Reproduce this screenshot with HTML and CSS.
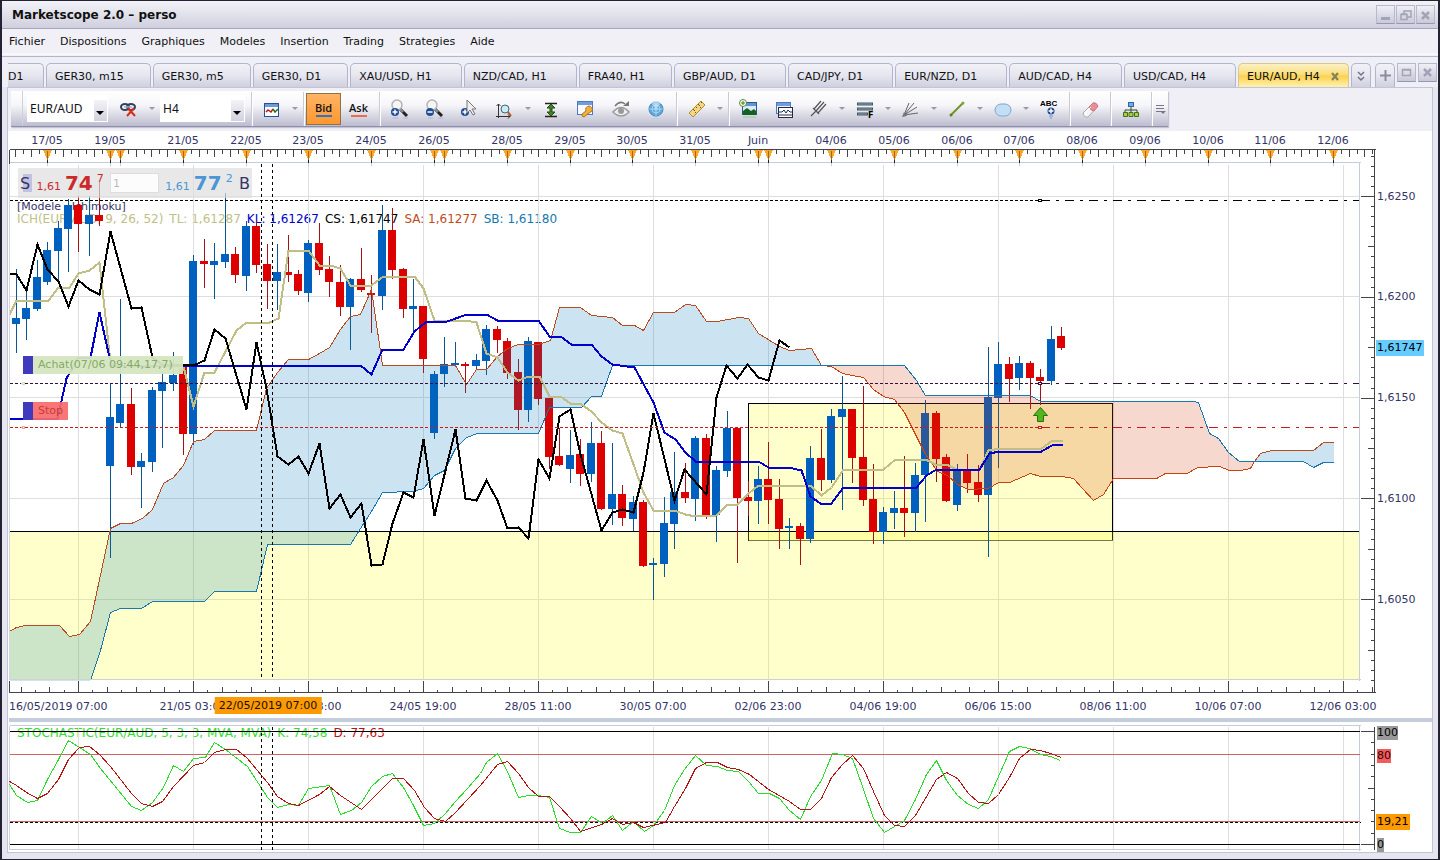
FILE: index.html
```html
<!DOCTYPE html>
<html lang="fr">
<head>
    <meta charset="utf-8">
    <title>Marketscope 2.0 – perso</title>
    <link rel="stylesheet" href="styles.css">
</head>
<body>
    <header class="titlebar">
        <h1>Marketscope 2.0 – perso</h1>
        <div class="winbtns">
            <button class="winbtn" aria-label="Réduire"><svg width="17" height="17"><path d="M4 12.5h9" stroke-width="3"/></svg></button>
            <button class="winbtn" aria-label="Restaurer"><svg width="17" height="17"><path d="M4 8.500h6v5h-6zM4 8h6M7 8V5h7v6h-4M7 5h7" stroke-width="1.500"/></svg></button>
            <button class="winbtn" aria-label="Fermer"><svg width="17" height="17"><path d="M5 6l7 7M12 6l-7 7" stroke-width="2.500"/></svg></button>
        </div>
    </header>

    <nav class="menu">
        <a href="#">Fichier</a>
        <a href="#">Dispositions</a>
        <a href="#">Graphiques</a>
        <a href="#">Modeles</a>
        <a href="#">Insertion</a>
        <a href="#">Trading</a>
        <a href="#">Strategies</a>
        <a href="#">Aide</a>
    </nav>

    <div class="tabs">
        <div class="tablist">
            <button class="tab first">D1</button>
            <button class="tab short">GER30, m15</button>
            <button class="tab short">GER30, m5</button>
            <button class="tab short">GER30, D1</button>
            <button class="tab">XAU/USD, H1</button>
            <button class="tab">NZD/CAD, H1</button>
            <button class="tab short">FRA40, H1</button>
            <button class="tab">GBP/AUD, D1</button>
            <button class="tab">CAD/JPY, D1</button>
            <button class="tab">EUR/NZD, D1</button>
            <button class="tab">AUD/CAD, H4</button>
            <button class="tab">USD/CAD, H4</button>
            <button class="tab active">EUR/AUD, H4<svg width="9" height="9"><path d="M1 1l6 7M7 1l-6 7" stroke="#85805f" stroke-width="2.200"/></svg></button>
        </div>
        <button class="tab small" aria-label="Liste"><svg width="18" height="22"><path d="M6 8l3 3 3-3M6 13l3 3 3-3" fill="none" stroke="#73738a" stroke-width="1.500"/></svg></button>
        <button class="tab small" aria-label="Ajouter"><svg width="18" height="22"><path d="M4 11.500h11M9.500 6v11" stroke="#8b8ba0" stroke-width="2"/></svg></button>
        <button class="winbtn" aria-label="Agrandir"><svg width="17" height="17"><path d="M4.500 5.500h8v6h-8zM4 6h9" stroke-width="1.500"/></svg></button>
        <button class="winbtn" aria-label="Fermer le graphique"><svg width="17" height="17"><path d="M5 5l7 7M12 5l-7 7" stroke-width="2.500"/></svg></button>
    </div>

    <main class="panel">
        <div class="toolrow">
            <div class="toolbar">
                <span class="grip"></span>
                <span class="combo symbol"><select aria-label="Instrument"><option>EUR/AUD</option></select></span>
                <button class="tool" aria-label="Lien"><svg width="20" height="24"><g fill="none" stroke="#33415e" stroke-width="2"><ellipse cx="6" cy="9" rx="4" ry="3"/><ellipse cx="12" cy="9" rx="4" ry="3"/></g><path d="M5 9h8" stroke="#a8b4cc" stroke-width="1.500"/><path d="M9 10l7 8M15 10l-7 8" stroke="#d2301c" stroke-width="2"/></svg></button>
                <span class="caret"></span>
                <span class="combo period"><select aria-label="Periode"><option>H4</option></select></span>
                <span class="sep"></span>
                <button class="tool" aria-label="Type de graphique"><svg width="20" height="24"><rect x="2.500" y="5.500" width="14" height="13" fill="#fff" stroke="#27509b"/><rect x="3" y="6" width="13" height="3" fill="#6b9bdb"/><path d="M4 14l2-2 3 2 2-3" fill="none" stroke="#c31818" stroke-width="1.500"/><path d="M11 11l2 3 3-3" fill="none" stroke="#257525" stroke-width="1.500"/><path d="M3 21h13" stroke="#b9c9e4"/></svg></button>
                <span class="caret"></span>
                <span class="sep"></span>
                <button class="tool price bid">Bid</button>
                <button class="tool price ask">Ask</button>
                <span class="sep"></span>
                <button class="tool" aria-label="Zoom avant"><svg width="22" height="24"><use href="#lens"/><circle cx="6" cy="14" r="4" fill="#204c98"/><path d="M3.500 14h5M6 11.500v5" stroke="#fff" stroke-width="1.500"/></svg></button>
                <button class="tool" aria-label="Zoom arriere"><svg width="22" height="24"><use href="#lens"/><circle cx="6" cy="14" r="4" fill="#204c98"/><path d="M3.500 14h5" stroke="#fff" stroke-width="1.500"/></svg></button>
                <button class="tool" aria-label="Curseur"><svg width="22" height="24"><circle cx="6" cy="14" r="4" fill="#204c98"/><path d="M3.500 14h5M6 11.500v5" stroke="#fff" stroke-width="1.500"/><path d="M8 2v13l3-3 3 5 2-1-3-5h4z" fill="#eee" stroke="#777"/></svg></button>
                <button class="tool" aria-label="Zoom axe"><svg width="20" height="24"><path d="M3.500 6v14M1 18.500h14" stroke="#333"/><path d="M1.500 8l2-2 2 2M13 16.500l2 2-2 2" fill="none" stroke="#333"/><circle cx="10" cy="11" r="4" fill="#c6ecf7" stroke="#4f606c"/><path d="M13 14l3 4" stroke="#b65a24" stroke-width="2"/></svg></button>
                <span class="caret"></span>
                <button class="tool" aria-label="Ajuster"><svg width="20" height="24"><path d="M4 5.500h12M4 18.500h12" stroke="#222" stroke-width="1.500"/><path d="M10 6l4 4h-3v4h3l-4 4-4-4h3v-4H6z" fill="#438321" stroke="#234f12"/></svg></button>
                <button class="tool" aria-label="Proprietes"><svg width="22" height="24"><rect x="2.500" y="3.500" width="15" height="13" fill="#f7faff" stroke="#5078be"/><rect x="3" y="4" width="14" height="3" fill="#709ce0"/><path d="M14 8a3.500 3.500 0 013 5l-3 2-5 4-2-1v-2l4-3a3.500 3.500 0 013-5z" fill="#efb13b" stroke="#af7522"/></svg></button>
                <button class="tool" aria-label="Afficher"><svg width="22" height="24"><path d="M3 14q8-9 16 0q-8 8-16 0z" fill="#eee" stroke="#9a9a9a" stroke-width="1.500"/><circle cx="11" cy="13" r="3" fill="#999"/><path d="M5 8q5-6 10-2" fill="none" stroke="#777" stroke-width="1.500"/><path d="M13 8h6V3z" fill="#777"/></svg></button>
                <button class="tool" aria-label="Radar"><svg width="20" height="24"><circle cx="10" cy="11" r="7" fill="#5fa9dd" stroke="#3c84be"/><g fill="none" stroke="#c0e2f5" stroke-opacity=".7"><circle cx="10" cy="11" r="4"/><circle cx="10" cy="11" r="1.500"/><path d="M10 4v14M3 11h14"/></g><path d="M10 11L5 5a8 8 0 0110 0z" fill="#e5f5fd" opacity=".5"/><path d="M6 21q4-2 8 0" stroke="#b6d3e8" fill="none"/></svg></button>
                <span class="sep"></span>
                <button class="tool" aria-label="Regle"><svg width="20" height="24"><path d="M2 15L14 3l4 4L6 19z" fill="#f2d783" stroke="#b68d35"/><path d="M6 11l2 2M9 9l1 1M11 6l2 2M14 4l1 1M8 15l1-1M13 10l1-1" stroke="#78571a"/></svg></button>
                <span class="caret"></span>
                <span class="sep"></span>
                <button class="tool" aria-label="Ajouter indicateur"><svg width="22" height="24"><rect x="4.500" y="4.500" width="14" height="12" fill="#d8edfc" stroke="#27589c"/><rect x="5" y="5" width="13" height="3" fill="#6594d5"/><path d="M5 17v-4l4-3 4 3 3-2 2 2v4z" fill="#166020"/><circle cx="5" cy="5" r="3.500" fill="#fff" stroke="#548d22"/><path d="M3 5h4M5 3v4" stroke="#467b17"/><path d="M5 19h13" stroke="#9dc29d"/></svg></button>
                <button class="tool" aria-label="Fenetres"><svg width="22" height="24"><rect x="3.500" y="4.500" width="14" height="11" fill="#edf3fc" stroke="#5377b4"/><rect x="4" y="5" width="13" height="3" fill="#709ce0"/><rect x="5.500" y="9.500" width="14" height="10" fill="#fff" stroke="#222b49"/><path d="M6 14h3l2-2 2 3 2-3 2 2h3M6 17h13" fill="none" stroke="#222b49"/></svg></button>
                <button class="tool" aria-label="Fourche"><svg width="20" height="24"><path d="M2 18L7 13M4 10l6 6M7 13L15 4M5 11l7-8M9 15l8-9" stroke="#555" stroke-width="1.200"/></svg></button>
                <span class="caret"></span>
                <button class="tool" aria-label="Fibonacci"><svg width="20" height="24"><path d="M2 6h16M2 11h16M2 16h11" stroke="#405866" stroke-width="3"/><path d="M3 6h14M3 11h14M3 16h9" stroke="#8ca3ae"/><text x="13" y="20" class="fmark">F</text></svg></button>
                <span class="caret"></span>
                <button class="tool" aria-label="Eventail"><svg width="20" height="24"><path d="M3 17L8 5M3 17L13 5M3 17l13-8M3 17l14-2" stroke="#666"/><path d="M1 19l2-5 3 4z" fill="#777"/></svg></button>
                <span class="caret"></span>
                <button class="tool" aria-label="Ligne"><svg width="20" height="24"><path d="M4 17L16 5" stroke="#739426" stroke-width="2"/><circle cx="4" cy="17" r="1.500" fill="#5d821b"/><circle cx="16" cy="5" r="1.500" fill="#85a53b"/></svg></button>
                <span class="caret"></span>
                <button class="tool" aria-label="Ellipse"><svg width="20" height="24"><rect x="2" y="6" width="16" height="12" rx="6" fill="#c3dff5" stroke="#7ea6cc"/></svg></button>
                <span class="caret"></span>
                <button class="tool" aria-label="Texte"><svg width="22" height="28"><text x="2" y="10" class="abc">ABC</text><circle cx="13" cy="15" r="3.500" fill="#1d498f"/><path d="M10.500 15h5M13 12.500v5" stroke="#fff" stroke-width="1.500"/><path d="M11 20h4M12 22h2" stroke="#6d94cf"/></svg></button>
                <span class="sep"></span>
                <button class="tool" aria-label="Effacer"><svg width="20" height="24"><path d="M3 15L13 5q3-1 5 3L8 19q-4 1-5-4z" fill="#f5f5f5" stroke="#aaa"/><path d="M9 9l4-4q3-1 5 3l-4 5q-3 0-5-4z" fill="#ea8f98" stroke="#cc7682"/><path d="M5 17q1-4 6-8" stroke="#fff" fill="none"/></svg></button>
                <span class="sep"></span>
                <button class="tool" aria-label="Strategies"><svg width="20" height="24"><rect x="7.500" y="4.500" width="5" height="4" fill="#73a9e4" stroke="#2c68ae"/><path d="M10 9v5M4 15v-3h12v3" fill="none" stroke="#33521a"/><path d="M2.500 14.500h4v4h-4zM8 14.500h4v4h-4zM13.500 14.500h4v4h-4z" fill="#acd143" stroke="#456c17"/></svg></button>
                <span class="sep"></span>
                <button class="tool more" aria-label="Plus"><svg width="12" height="14"><path d="M1 2.500h8M1 5.500h8M1 8.500h5" stroke="#777789"/><path d="M5 8h6l-3 3z" fill="#777789"/></svg></button>
            </div>
        </div>

        <section class="chart">
            <div class="dates top" id="topDates"></div>
            <div class="plot">
                <div class="legend">
                    <p class="model">[Modele : Ichimoku]</p>
                    <p><span class="tl">ICH(EUR/AUD, 9, 26, 52)</span><span class="tl">TL: 1,61287</span><span class="kl">KL: 1,61267</span><span class="cs">CS: 1,61747</span><span class="sa">SA: 1,61277</span><span class="sb">SB: 1,61180</span></p>
                </div>
                <svg id="mainChart" viewBox="9 149 1367 544" preserveAspectRatio="none"></svg>
                <div class="quote">
                    <span class="side">S</span>
                    <span class="sell"><small>1,61</small><b>74</b><sup>7</sup></span>
                    <input type="text" value="1" aria-label="Quantite">
                    <span class="buy"><small>1,61</small><b>77</b><sup>2</sup></span>
                    <span class="side">B</span>
                </div>
                <div class="order buyorder">Achat(07/06 09:44,17,7)</div>
                <div class="order stop">Stop</div>
            </div>
            <div class="prices" id="prices"></div>
            <div class="dates bottom" id="bottomDates"></div>
        </section>

        <div class="splitter"></div>

        <section class="stoch">
            <div class="plot">
                <div class="legend stochlegend">
                    <p><span class="k">STOCHASTIC(EUR/AUD, 5, 3, 3, MVA, MVA)</span><span class="k">K: 74,58</span><span class="d">D: 77,63</span></p>
                </div>
                <svg id="stochChart" viewBox="9 722 1367 130" preserveAspectRatio="none"></svg>
            </div>
            <div class="prices" id="levels"></div>
        </section>
    </main>

    <!-- loupe commune aux deux zooms -->
    <svg width="0" height="0" class="defs">
        <g id="lens"><path d="M11 11l7 7" stroke="#222" stroke-width="3"/><path d="M11 11l3 3" stroke="#888" stroke-width="3"/><circle cx="8" cy="7" r="5" fill="#f5f5f5" stroke="#b5b5b9" stroke-width="1.500"/><path d="M4 20h5M14 20h5" stroke="#a9b9d6"/></g>
    </svg>

    <script src="chart.js"></script>
</body>
</html>
```
FILE: styles.css
```css
* {
    box-sizing: border-box;
}

body {
    margin: 0;
    height: 100vh;
    min-height: 500px;
    display: flex;
    flex-direction: column;
    background: #e6e6f0;
    border: 1px solid #252333;
    border-width: 1px 2px 1px 2px;
    font-family: "DejaVu Sans", Verdana, sans-serif;
    font-size: 11px;
    color: #111;
    overflow: hidden;
}

button, input, select {
    font: inherit;
    color: inherit;
    margin: 0;
    padding: 0;
}

p {
    margin: 0;
}

.defs {
    position: absolute;
}

/* barre de titre */
.titlebar {
    height: 28px;
    flex: none;
    display: flex;
    align-items: center;
    justify-content: space-between;
    padding: 0 3px 0 10px;
    background: linear-gradient(#f2f2f8, #e0e0ea 55%, #cfcfde);
    border-bottom: 1px solid #a9a7c0;
}

h1 {
    margin: 0;
    font-size: 12px;
}

.winbtns {
    display: flex;
    gap: 1px;
}

.winbtn {
    width: 19px;
    height: 19px;
    flex: none;
    background: linear-gradient(#efeff6, #c9c9da);
    border: 1px solid #b9b9cc;
    border-bottom-color: #9797b0;
}

.winbtn svg {
    display: block;
    fill: none;
    stroke: #a3a3b8;
}

/* menu */
.menu {
    height: 28px;
    flex: none;
    display: flex;
    gap: 15px;
    padding: 0 7px;
    line-height: 25px;
    background: linear-gradient(#f0f0f6 24px, #fff 25px, #f0f0f6 26px);
    border-bottom: 1px solid #b8b2cf;
}

.menu a {
    color: #111;
    text-decoration: none;
}

/* onglets */
.tabs {
    height: 30px;
    flex: none;
    display: flex;
    align-items: flex-start;
    gap: 2px;
    padding: 6px 1px 0 6px;
    background: #efeff6;
}

.tablist {
    flex: 1;
    display: flex;
    gap: 2px;
    overflow: hidden;
}

.tab {
    height: 24px;
    flex: none;
    padding: 1px 29px 0 8px;
    white-space: nowrap;
    background: linear-gradient(#f1f1f7, #e6e6f0 50%, #cfcfdf);
    border: 1px solid #b6b3cf;
    border-bottom: 0;
    border-radius: 5px 5px 0 0;
}

.tab.short {
    padding-right: 26px;
}

.tab.first {
    width: 36px;
    padding: 1px 0 0;
    border-left: 0;
    border-top-left-radius: 0;
    text-align: left;
}

.tab.active {
    padding-right: 8px;
    background: linear-gradient(#fbf1c4, #fadf7b 45%, #ffd04a 52%, #fdf2b4);
    border-color: #d8c88e;
}

.tab.active svg {
    margin-left: 11px;
    vertical-align: -1px;
}

.tab.small {
    width: 20px;
    padding: 0;
    margin-right: 2px;
}

.tab.small + .winbtn {
    margin-left: -2px;
}

/* zone principale */
.panel {
    flex: 1;
    min-height: 0;
    display: flex;
    flex-direction: column;
    margin: 0 5px 6px 5px;
    background: #fff;
    border: 1px solid #c5c3d8;
    padding-left: 1px;
}

.toolrow {
    height: 43px;
    flex: none;
    margin-left: -1px;
    padding: 3px 0 0 3px;
    background: #efeff5;
}

.toolbar {
    display: inline-flex;
    align-items: center;
    height: 36px;
    background: linear-gradient(#fff, #f6f6fa 40%, #d9d9e4 70%, #bcbccf);
    border-bottom: 1px solid #8f8fab;
    box-shadow: 1px 1px 1px #c5c5d5;
}

.grip {
    width: 12px;
    height: 35px;
    margin-right: 4px;
    border-right: 1px solid #d0d0de;
}

.combo {
    position: relative;
    height: 27px;
    width: 81px;
    background: #fff;
}

.combo.period {
    width: 85px;
    margin: 0 3px;
}

.combo.symbol {
    margin-right: 3px;
}

.combo select {
    appearance: none;
    width: 100%;
    height: 26px;
    padding: 0 3px;
    background: none;
    border: 0;
    font-family: "Noto Sans", Tahoma, sans-serif;
    font-size: 12px;
}

.combo::after {
    content: "";
    position: absolute;
    right: 1px;
    bottom: 1px;
    width: 13px;
    height: 21px;
    background: linear-gradient(#f2f2f7, #d2d2df);
    pointer-events: none;
}

.combo::before {
    content: "";
    position: absolute;
    z-index: 1;
    right: 4px;
    bottom: 7px;
    border: 4px solid transparent;
    border-top: 4px solid #000;
    border-bottom: 0;
    pointer-events: none;
}

.tool {
    width: 35px;
    height: 32px;
    display: flex;
    align-items: center;
    justify-content: center;
    background: none;
    border: 0;
}

.tool svg {
    margin-top: 2px;
}

.tool.more {
    width: 14px;
}

.tool.price {
    font-family: "Open Sans", sans-serif;
    font-size: 11px;
    font-weight: 600;
    line-height: 14px;
    flex-direction: column;
}

.tool.price::after {
    content: "";
    width: 16px;
    height: 2px;
    background: #ee6a4b;
}

.tool.bid {
    background: linear-gradient(#fdb365, #fd9830);
    border: 1px solid #8d7348;
}

.tool.bid::after {
    background: #2c76c4;
}

.caret {
    width: 11px;
}

.caret::after {
    content: "";
    display: block;
    margin-left: 3px;
    width: 0;
    border: 3px solid transparent;
    border-top-color: #9a9aab;
    border-bottom: 0;
}

.sep {
    width: 6px;
    height: 34px;
    background: linear-gradient(90deg, transparent 3px, #c9c9d8 3px, #c9c9d8 4px, #fff 4px, #fff 5px, transparent 5px);
}

.fmark {
    font: bold 8px "DejaVu Sans", sans-serif;
}

.abc {
    font: bold 8px "Liberation Sans", sans-serif;
}

/* graphique */
.chart {
    flex: 1;
    min-height: 0;
    display: grid;
    grid-template: 18px minmax(0, 1fr) 25px / minmax(0, 1fr) 56px;
}

.dates {
    position: relative;
    grid-column: 1 / 3;
    color: #333366;
}

.dates span {
    position: absolute;
    white-space: nowrap;
    transform: translateX(-50%);
    line-height: 19px;
}

.dates.bottom span {
    top: 4px;
}

.dates .start {
    transform: none;
}

.dates.bottom .cursor {
    padding: 0 4px;
    line-height: 17px;
    background: #ff9900;
    color: #111;
}

.plot {
    position: relative;
    min-height: 0;
}

.plot > svg {
    position: relative;
    display: block;
    width: 100%;
    height: 100%;
}

.prices {
    position: relative;
    color: #333366;
}

.prices span {
    position: absolute;
    left: 1px;
    line-height: 14px;
    transform: translateY(-50%);
}

.prices .last, .prices .value {
    left: 0;
    padding: 0 1px;
    line-height: 16px;
    background: #66ccff;
    color: #000;
}

.prices .value {
    background: #ff9900;
}

.prices .grey {
    background: #999;
    color: #000;
}

.prices .red {
    background: #f25c5c;
    color: #300;
}

.legend {
    position: absolute;
    left: 8px;
    top: 51px;
    font-size: 12px;
    line-height: 13px;
    white-space: nowrap;
}

.stochlegend {
    top: 5px;
}

.legend span {
    margin-right: 6px;
}

.legend .model {
    font-size: 11px;
    color: #333366;
}

.tl { color: #c0c088; }
.kl { color: #0000cc; }
.cs { color: #000; }
.sa { color: #bf4a1c; }
.sb { color: #1478af; }
.k { color: #33dd33; }
.d { color: #c01010; }

/* prix achat / vente */
.quote {
    position: absolute;
    left: 9px;
    top: 19px;
    width: 234px;
    height: 30px;
    display: flex;
    align-items: center;
    justify-content: space-between;
    padding: 0 2px;
    background: linear-gradient(90deg, transparent 5px, rgba(120, 120, 210, .35) 5px, rgba(120, 120, 210, .35) 14px, transparent 14px) 0 6px / 100% 18px no-repeat, rgba(222, 222, 222, .7);
}

.quote .side {
    font-size: 16px;
    color: #333366;
}

.quote small {
    font-size: 11px;
    margin-right: 4px;
}

.quote b {
    font-size: 20px;
}

.quote sup {
    font-size: 11px;
    line-height: 0;
    margin-left: 4px;
    vertical-align: 8px;
}

.sell { color: #cc2a2a; }
.buy { color: #4b96d6; }

.quote input {
    width: 49px;
    height: 20px;
    padding: 0 2px;
    border: 1px solid #ddd;
    background: rgba(255, 255, 255, .85);
    color: #bbb;
}

.order {
    position: absolute;
    left: 14px;
    height: 18px;
    line-height: 18px;
    padding: 0 5px;
    border-left: 10px solid #3e3cbd;
}

.buyorder {
    top: 38%;
    padding-right: 10px;
    background: rgba(214, 230, 192, .95);
    color: #84aa68;
}

.stop {
    top: 253px;
    background: rgba(250, 105, 105, .92);
    color: #c43d3d;
}

.splitter {
    height: 4px;
    flex: none;
    background: #c3cddc;
}

.stoch {
    flex: none;
    height: 130px;
    display: grid;
    grid-template-columns: minmax(0, 1fr) 56px;
}
```
FILE: chart.js
```js
var X0 = 9, W = 1423;
var STEP = 115 / 11; // une bougie H4

// [meche haut, meche bas, corps haut, corps bas, hausse]
var candles = [
    [268,352,318,324,1],[290,339,308,319,1],[259,310,277,309,1],[241,284,250,282,1],[220,282,228,251,1],[198,271,205,229,1],
    [195,251,205,224,0],[195,255,215,224,1],[181,225,215,221,0],[382,557,417,466,1],[298,427,404,423,1],[387,474,404,467,0],
    [452,507,461,467,1],[386,471,390,462,1],[370,447,382,391,1],[351,390,375,383,1],[366,454,366,434,0],[254,444,261,434,1],
    [238,287,261,264,0],[242,298,261,265,1],[192,267,254,262,1],[246,282,254,275,0],[220,290,226,276,1],[220,272,226,265,0],
    [243,308,264,281,0],[243,309,272,281,1],[234,281,272,275,0],[269,294,274,291,0],[239,301,243,293,1],[222,274,243,270,0],
    [255,296,269,282,0],[264,315,282,307,0],[277,349,279,307,1],[247,291,279,290,0],[274,332,293,295,0],[204,309,230,296,1],
    [207,278,230,270,0],[267,317,269,309,0],[278,333,306,309,1],[306,372,306,359,0],[370,438,374,433,1],[336,386,364,374,1],
    [341,366,363,365,1],[361,392,364,366,0],[353,369,360,366,1],[324,374,329,361,1],[325,352,329,340,0],[337,378,341,373,0],
    [358,429,372,410,0],[336,421,341,410,1],[342,404,342,399,0],[396,468,398,457,0],[427,465,456,465,0],[429,482,455,469,1],
    [438,485,454,474,0],[421,481,443,474,1],[430,509,443,509,0],[442,524,494,509,1],[484,525,494,518,0],[495,530,502,519,1],
    [499,566,502,566,0],[557,599,563,565,1],[496,576,523,564,1],[451,548,492,524,1],[462,502,492,498,0],[435,520,438,499,1],
    [433,518,438,516,0],[465,541,470,515,1],[410,476,428,471,1],[428,562,428,498,0],[480,515,497,501,0],[465,523,479,501,1],
    [441,523,479,500,0],[478,548,499,529,0],[517,548,526,528,1],[522,564,526,539,0],[445,542,458,539,1],[428,490,458,480,0],
    [408,482,416,480,1],[375,509,409,417,1],[409,482,409,458,0],[385,505,457,500,0],[463,543,499,532,0],[506,543,512,532,1],
    [490,528,508,513,1],[455,536,508,513,0],[462,531,475,513,1],[399,521,413,475,1],[410,481,413,459,0],[453,501,457,501,0],
    [463,510,470,505,1],[453,492,471,483,0],[464,501,482,495,0],[346,556,397,495,1],[341,467,364,398,1],[356,401,364,379,0],
    [355,389,363,378,1],[360,408,363,378,0],[368,404,377,381,0],[325,384,339,381,1],[326,349,336,348,0]
];

var chikou = "9,273 16,274 26,290 37,244 47,269 58,281 68,306 78,280 89,289 99,294 110,231 131,308 141,307 152,357 162,364 193,365 204,360 214,329 225,338 246,409 256,342 266,388 277,456 288,464 298,456 308,473 319,443 329,508 340,494 350,517 361,503 371,565 382,564 392,523 403,492 413,497 423,439 434,515 455,429 465,498 476,500 486,480 497,500 507,528 518,527 528,538 538,459 549,478 559,416 570,409 580,454 601,530 612,512 622,509 633,512 643,472 653,413 674,500 684,469 706,494 716,397 726,365 737,378 747,364 758,377 768,380 779,340 789,347";
var kijun = "9,418 57,418 66,378 78,357 90,357 99,312 109,357 112,365 360,365 371,374 382,349 403,349 414,331 425,322 447,321 466,314 486,314 497,320 538,320 549,336 560,336 571,344 591,344 601,356 612,364 634,367 653,402 664,432 675,439 685,452 695,461 758,461 768,467 788,467 801,470 810,496 820,503 831,503 843,487 916,487 926,475 936,469 979,469 989,453 999,451 1041,451 1053,444 1062,444";
var tenkan = "9,314 16,300 48,300 58,287 69,287 78,273 89,270 99,262 109,353 112,366 183,366 193,406 204,372 214,372 236,330 246,322 269,322 278,318 288,250 308,250 319,265 330,265 340,268 350,285 371,285 383,276 414,276 423,288 434,320 465,320 476,322 486,353 497,357 507,372 518,380 528,376 539,376 549,396 560,396 570,403 581,404 591,411 601,422 612,430 622,433 643,492 653,510 674,510 685,514 695,516 716,515 727,504 737,504 747,494 758,485 789,485 811,486 821,495 831,487 843,469 883,469 895,459 925,459 935,464 946,464 956,469 979,469 988,450 1000,448 1041,448 1052,440 1062,440";

// nuage : trois morceaux selon le croisement de SA et SB
var saA = "9,631 16,627 25,625 59,625 69,636 79,634 90,621 110,528 120,523 131,523 142,518 152,509 163,483 173,477 183,465 193,441 204,439 214,430 256,430 266,388 277,372 288,359 308,359 319,353 329,347 340,329 350,316 360,314 371,289 382,365 455,365 466,384 476,369 486,369 497,356 507,348 518,344 538,344 550,340 559,307 580,307 591,315 612,317 622,325 634,325 643,330 653,312 674,312 685,304 695,305 706,321 717,321 738,317 748,318 758,333 779,346 789,350 811,348 821,365";
var saB = "821,365 831,366 842,373 852,375 863,377 873,389 883,396 894,399 904,412 914,432 925,454 937,471 947,475 957,484 968,489 988,488 998,482 1009,482 1030,473 1040,476 1062,476 1073,478 1082,488 1093,500 1103,494 1113,478 1156,478 1165,473 1187,473 1197,467 1219,466 1229,470 1240,470 1250,468 1254,461";
var saC = "1254,461 1260,453 1271,450 1313,450 1323,442 1333,442";
var sbA = "90,680 100,650 110,612 120,608 141,608 152,601 204,601 214,591 256,591 267,544 350,544 360,528 371,511 382,492 412,491 423,488 434,475 444,470 455,448 466,437 477,433 538,433 549,407 581,407 591,396 601,396 612,365 821,365";
var sbB = "821,365 904,365 916,380 925,395 1030,395 1040,401 1193,401 1198,402 1209,433 1218,438 1228,452 1239,461 1254,461";
var sbC = "1254,461 1303,461 1313,467 1323,462 1333,462";

var stochK = "9,784 16,795 27,802 37,800 47,779 58,759 68,740 79,747 90,754 100,768 131,806 141,810 152,802 163,787 173,765 183,771 193,758 205,757 214,742 225,749 247,766 267,797 277,807 288,804 298,805 308,788 329,785 340,814 351,810 361,802 371,786 382,776 392,773 403,787 413,805 423,825 434,823 444,814 455,801 467,788 480,773 486,762 497,753 507,771 518,797 528,795 538,795 549,797 559,828 570,832 580,832 591,816 602,823 612,815 622,830 633,821 644,831 653,825 664,810 674,785 684,769 695,755 706,765 717,766 727,770 738,771 748,781 758,793 769,793 779,798 789,810 800,819 810,796 821,780 832,753 842,754 852,758 862,786 873,818 884,832 894,826 904,820 915,799 926,774 936,760 946,780 957,795 968,804 978,808 988,799 998,776 1009,751 1019,746 1029,748 1040,754 1050,756 1060,760";
var stochD = "9,781 16,785 26,792 37,798 47,793 58,779 68,759 79,747 89,746 99,754 110,766 131,793 141,803 152,806 162,801 173,786 193,765 204,762 214,752 225,749 236,749 246,757 267,782 277,796 288,803 298,805 319,794 329,786 340,795 361,809 382,788 392,778 403,778 414,790 424,807 434,818 445,821 455,812 467,799 480,785 497,764 507,761 518,773 528,787 538,796 549,796 559,806 570,818 580,831 601,824 612,818 622,824 633,822 643,827 665,822 674,806 685,788 695,768 706,762 717,762 727,767 738,769 749,774 768,789 789,801 800,809 810,809 821,798 831,777 842,764 852,755 863,768 873,791 884,815 894,825 904,826 915,815 936,779 946,772 957,778 968,793 978,802 988,803 998,794 1009,777 1019,758 1030,749 1040,750 1050,753 1061,757";

var days = [[47,"17/05"],[110,"19/05"],[120,""],[183,"21/05"],[246,"22/05"],[308,"23/05"],[371,"24/05"],[434,"26/05"],[444,""],[507,"28/05"],[570,"29/05"],[632,"30/05"],[695,"31/05"],[758,"Juin"],[768,""],[831,"04/06"],[894,"05/06"],[957,"06/06"],[1019,"07/06"],[1082,"08/06"],[1145,"09/06"],[1208,"10/06"],[1270,"11/06"],[1333,"12/06"]];

function line(x1, y1, x2, y2, color, extra) {
    return '<line x1="' + x1 + '" y1="' + y1 + '" x2="' + x2 + '" y2="' + y2 + '" stroke="' + color + '" ' + (extra || '') + '/>';
}

function rect(x, y, w, h, fill, extra) {
    return '<rect x="' + x + '" y="' + y + '" width="' + w + '" height="' + h + '" fill="' + fill + '" ' + (extra || '') + '/>';
}

function poly(points, color, width) {
    return '<polyline points="' + points + '" fill="none" stroke="' + color + '" stroke-width="' + width + '"/>';
}

function cloud(a, b, fill) {
    return '<polygon points="' + a + ' ' + b.split(' ').reverse().join(' ') + '" fill="' + fill + '"/>';
}

function grid(y1, y2) {
    var s = '';
    for (var x = 78; x < 1360; x += 115) s += line(x, y1, x, y2, '#dedee0');
    return s;
}

function drawMain() {
    var s = '', i, j, x, y;
    var dark = '#44444c';

    s += grid(164, 679);
    [196, 296, 397, 498, 599].forEach(function (y) { s += line(9, y, 1359, y, '#dedee0'); });

    // zones jaunes
    s += rect(748, 403, 364, 137, 'rgba(255,255,0,.2)', 'stroke="#000"');
    s += rect(9, 531, 1350, 148, 'rgba(255,255,0,.2)');
    s += line(748, 540, 1112, 540, '#77774a') + line(9, 531, 1359, 531, '#000');

    // bougies
    candles.forEach(function (c, n) {
        var cx = Math.ceil(78 + (n - 6) * STEP - .01);
        s += line(cx, c[0], cx, c[1], c[4] ? '#0b5594' : '#a81018');
        s += rect(cx - 4.5, c[2] - .5, 8, Math.max(2, c[3] - c[2]), c[4] ? '#0060c0' : '#dd0000');
    });

    // nuage
    s += cloud(saA, '9,680 ' + sbA, 'rgba(0,120,185,.2)');
    s += cloud(saB, sbB, 'rgba(210,60,10,.2)');
    s += cloud(saC, sbC, 'rgba(0,120,185,.2)');
    s += poly(saA, '#b84c20', 1) + poly(saB, '#c8440e', 1) + poly(saC, '#b84c20', 1);
    s += poly(sbA + ' ' + sbB + ' ' + sbC, '#1a78ac', 1);

    s += poly(tenkan, '#c0bd86', 2) + poly(kijun, '#0000cc', 2) + poly(chikou, '#000', 2);

    // ordres
    [[200, '#000'], [383, '#301038'], [427, '#c41c1c']].forEach(function (o) {
        s += line(9, o[0], 1040, o[0], o[1], 'stroke-dasharray="3 2"');
        s += line(1040, o[0], 1359, o[0], o[1], 'stroke-dasharray="9 6 3 6"');
        s += '<circle cx="1039.500" cy="' + o[0] + '" r="1.500" fill="#fff" stroke="' + o[1] + '"/>';
    });
    s += '<circle cx="23" cy="383" r="1.500" fill="none" stroke="#cfe0bd"/><circle cx="23" cy="427" r="1.500" fill="none" stroke="#f2a0a0"/>';
    s += line(261, 163, 261, 677, '#000', 'stroke-dasharray="3 3"') + line(272, 163, 272, 677, '#000', 'stroke-dasharray="3 3"');

    // fleche d'achat
    s += '<path d="M1040 407l7 8h-4v6h-6v-6h-4z" fill="#54b51f" stroke="#23720c" shape-rendering="auto"/>';

    // cadre
    s += line(9, 162, 1360, 162, '#c5ced8') + line(1359, 162, 1359, 680, '#c5ced8') + line(9, 679, 1360, 679, '#d2d2cc') + line(9, 163, 9, 679, '#d5d5dd');

    // regle du haut
    s += line(9, 149, 1375, 149, dark) + line(9, 149, 9, 163, dark) + line(1374, 149, 1374, 693, dark);
    for (i = 0; i < days.length; i++) {
        x = days[i][0];
        s += '<path d="M' + (x - 4.500) + ' 149.500h9l-4.500 10z" fill="#ffa62b"/>' + line(x, 150, x, 161, '#9b6a25') + line(x, 159, x, 162, '#222') + line(x, 162, x, 165, '#c5ced8');
        var next = i + 1 < days.length ? days[i + 1][0] : 1396;
        if (next - x > 20) {
            for (j = 1; j < 8; j++) {
                var tx = Math.round(x + j * 7.84);
                if (tx < 1374) s += line(tx, 149, tx, j % 2 ? 153 : 156, dark);
            }
        }
    }
    [15, 31].forEach(function (x) { s += line(x, 149, x, 156, dark); });
    [23, 39].forEach(function (x) { s += line(x, 149, x, 153, dark); });

    // regle de droite
    for (i = -4; i <= 48; i++) {
        y = Math.round(196 + i * 10.08);
        if (y > 684) break;
        var len = i % 10 === 0 ? 14 : i % 5 === 0 ? 7 : 4;
        s += line(1374 - len, y, 1374, y, dark);
    }

    // regle du bas
    s += line(9, 692, 1375, 692, dark) + line(9, 680, 9, 692, dark);
    for (i = -4; i < 92; i++) {
        x = Math.round(78 + i * 14.375);
        if (x > 1373) break;
        s += line(x, i % 8 === 0 ? 680 : i % 2 ? 689 : 686, x, 692, dark);
    }

    document.getElementById('mainChart').innerHTML = '<g transform="translate(.5 .5)" shape-rendering="crispEdges">' + s + '</g>';
}

function drawStoch() {
    var dark = '#44444c';
    var s = grid(726, 849);
    s += line(9, 725, 1360, 725, '#c5ced8') + line(9, 849, 1360, 849, '#c5ced8') + line(1359, 725, 1359, 850, '#c5ced8') + line(9, 725, 9, 849, '#d5d5dd');
    s += line(9, 731, 1359, 731, '#000') + line(9, 844, 1359, 844, '#000');
    s += line(9, 754, 1359, 754, '#cc6464') + line(9, 821, 1359, 821, '#cc6464');
    s += line(9, 822, 1360, 822, '#000', 'stroke-dasharray="3 2"');
    s += poly(stochK, '#2bdd2b', 1) + poly(stochD, '#b51414', 1);
    s += line(261, 726, 261, 849, '#000', 'stroke-dasharray="3 3"') + line(272, 726, 272, 849, '#000', 'stroke-dasharray="3 3"');
    s += line(1374, 726, 1374, 849, dark);
    for (var i = 0; i <= 10; i++) {
        var y = Math.round(731 + i * 11.3);
        s += line(1374 - (i % 10 === 0 ? 14 : i === 5 ? 7 : 4), y, 1374, y, dark);
    }
    document.getElementById('stochChart').innerHTML = '<g transform="translate(.5 .5)" shape-rendering="crispEdges">' + s + '</g>';
}

function label(text, side, value, cls) {
    return '<span class="' + (cls || '') + '" style="' + side + ':' + value * 100 + '%">' + text + '</span>';
}

function drawLabels() {
    var s = '';
    days.forEach(function (d) { if (d[1]) s += label(d[1], 'left', (d[0] - X0) / W); });
    document.getElementById('topDates').innerHTML = s;

    s = label('16/05/2019 07:00', 'left', 0, 'start');
    ['21/05 03:00', '22/05 23:00', '24/05 19:00', '28/05 11:00', '30/05 07:00', '02/06 23:00', '04/06 19:00', '06/06 15:00', '08/06 11:00', '10/06 07:00', '12/06 03:00'].forEach(function (t, n) {
        s += label(t, 'left', (193 + n * 115 - X0) / W);
    });
    s += label('22/05/2019 07:00', 'left', (268 - X0) / W, 'cursor');
    document.getElementById('bottomDates').innerHTML = s;

    s = '';
    [['1,6250', 197], ['1,6200', 297], ['1,6150', 398], ['1,6100', 499], ['1,6050', 600]].forEach(function (p) {
        s += label(p[0], 'top', (p[1] - 149) / 544);
    });
    s += label('1,61747', 'top', (348 - 149) / 544, 'last');
    document.getElementById('prices').innerHTML = s;

    document.getElementById('levels').innerHTML =
        label('100', 'top', 11 / 130, 'grey') + label('80', 'top', 34 / 130, 'red') +
        label('19,21', 'top', 100 / 130, 'value') + label('0', 'top', 123 / 130, 'grey');
}

drawMain();
drawStoch();
drawLabels();
```
